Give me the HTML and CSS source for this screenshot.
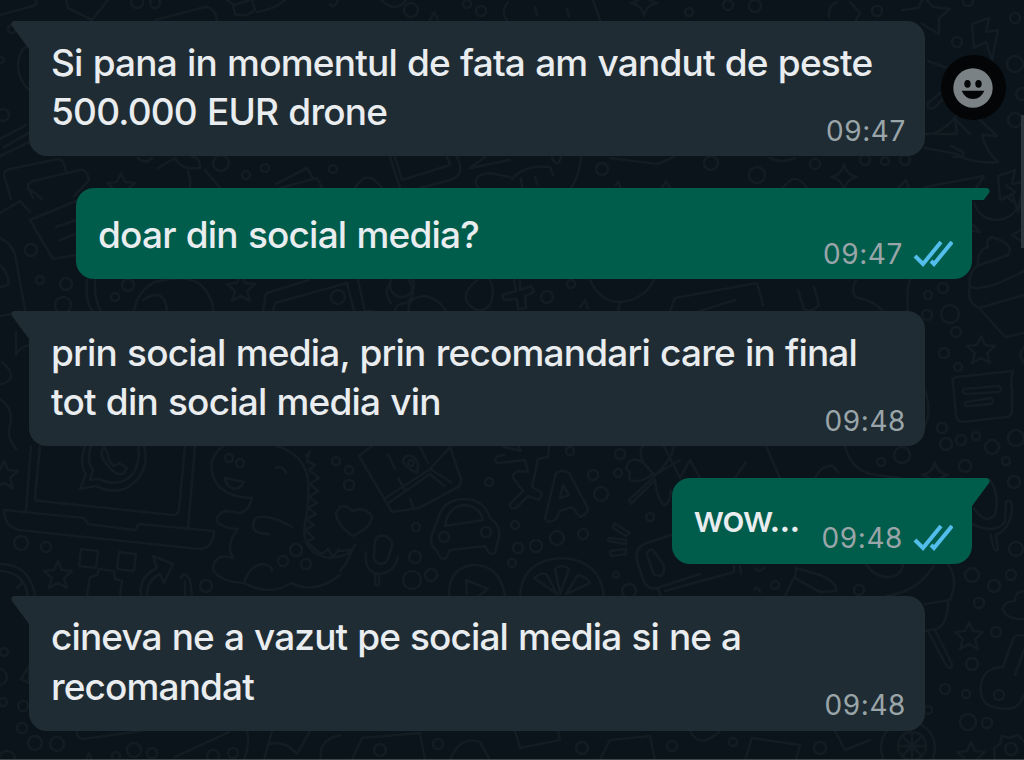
FILE: index.html
```html
<!DOCTYPE html>
<html lang="ro">
<head>
    <meta charset="UTF-8">
    <meta name="viewport" content="width=device-width, initial-scale=1.0">
    <title>Chat</title>
    <link rel="stylesheet" href="styles.css">
</head>
<body>
    <svg class="wallpaper" viewBox="0 0 1024 760" aria-hidden="true">
        <defs>
            <path id="star" d="M0-14 L4-5 L14-4 L6 3 L9 13 L0 8 L-9 13 L-6 3 L-14-4 L-4-5 Z"/>
            <path id="spark" d="M0-13 Q2-2 13 0 Q2 2 0 13 Q-2 2 -13 0 Q-2-2 0-13 Z"/>
            <path id="bolt" d="M-9-14 L8-20 L5-6 L17-8 L11 22 L5 4 L-7 10 Z"/>
            <path id="tail" d="M20 0 H3 Q-1 1 1 5 L18 28 H20 Z"/>
            <g id="checks">
                <path d="M2 16 L10 24 L28 2"/>
                <path d="M18 21 L21 24 L39 2"/>
            </g>
        </defs>

        <!-- top strip -->
        <path d="M0 15 L33 6 Q38 4 36 0 M66 0 L68 8 L92 20 L108 0 M155 20 L205 7 Q215 7 217 20"/>
        <path d="M227 0 L234 5 L250 0 M233 6 L235 14 Q246 18 255 10 L252 0 M257 12 Q275 9 285 0"/>
        <path d="M330 4 Q334 10 338 0 M381 0 Q396 14 406 0 M430 20 L434 12 L438 20 M507 20 Q500 12 508 2"/>
        <path d="M535 7 L537 15 M567 9 L569 17 M593 0 L600 20 M829 17 Q828 5 837 2 M850 2 L860 13 L856 20"/>
        <circle cx="137" cy="2" r="6"/><circle cx="155" cy="3" r="5"/><circle cx="411" cy="10" r="7"/>
        <circle cx="467" cy="4" r="4"/><circle cx="481" cy="11" r="5"/><circle cx="689" cy="12" r="4"/>
        <circle cx="728" cy="5" r="5"/><circle cx="755" cy="6" r="6"/><circle cx="877" cy="11" r="5"/><circle cx="968" cy="1" r="5"/>
        <use href="#spark" x="644" y="3"/>

        <!-- left edge -->
        <path d="M29 44 Q18 52 18 65 Q18 80 29 90 M0 139 L26 125 M4 147 L29 133 M0 156 L29 142"/>
        <circle cx="12" cy="29" r="4"/><circle cx="1" cy="60" r="3"/><circle cx="3" cy="115" r="6"/>
        <path d="M11 199 L4 175 Q4 170 10 169 L58 159 Q64 159 66 171 M33 198 L28 188 Q27 183 33 181 L80 170 Q87 169 89 180 L74 196 M28 188 L42 199"/>
        <path d="M0 213 L20 201 L30 212 M30 220 L76 201 M30 220 L53 259 L76 255 M56 227 L76 220 M60 240 L76 234 M0 238 Q10 242 15 254 L25 310 M0 265 Q10 275 8 285 L0 287 M0 316 L11 314"/>
        <circle cx="31" cy="250" r="6"/><circle cx="40" cy="280" r="4"/><circle cx="66" cy="284" r="6"/><circle cx="63" cy="305" r="8"/>
        <path d="M16 332 V355 Q18 348 29 345 M2 362 Q12 370 11 378 Q6 384 0 384 M0 399 Q14 408 10 425 Q6 437 16 449"/>

        <!-- strip under the first bubble -->
        <path d="M158 168 L175 158 M175 158 Q180 170 200 168 Q200 156 192 157 M188 171 Q191 180 190 188 M205 170 L220 188 M138 158 Q145 165 152 158"/>
        <path d="M276 184 L307 168 L313 178 M280 188 L317 178 L322 188 M355 188 Q367 167 382 188 M390 157 L400 188 M395 157 L402 180 L450 165 L447 157 M457 157 Q466 175 450 180 L420 188"/>
        <path d="M470 168 L485 157 M471 168 L509 160 M478 188 Q470 175 490 173 L510 177 M512 179 Q525 164 550 167 L553 175 M522 187 L521 178 M537 184 L535 177 M561 157 Q557 170 552 157 M581 157 Q580 175 571 188 M610 158 L658 164 L674 157 M770 158 Q782 164 795 158"/>
        <circle cx="221" cy="163" r="8"/><circle cx="246" cy="175" r="4"/><circle cx="265" cy="168" r="4"/><circle cx="333" cy="169" r="4"/>
        <circle cx="602" cy="169" r="6"/><circle cx="711" cy="163" r="7"/><circle cx="757" cy="175" r="8"/><circle cx="815" cy="164" r="5"/>
        <circle cx="865" cy="160" r="5"/><circle cx="885" cy="161" r="4"/><circle cx="905" cy="160" r="5"/><path d="M783 188 Q795 170 807 188 M616 185 L618 181 L621 188 M662 188 L666 181 L670 188"/>
        <use href="#star" x="121" y="187"/><use href="#spark" x="844" y="177"/>

        <!-- right side, top -->
        <path d="M902 10 L918 8 L924-3 M924-3 L933 7 L950 9 L939 18 L939 34 L922 24 M928 61 L947 68 M940 93 L928 103 Q926 110 934 108 L944 98 M925 134 Q940 136 958 114 M934 134 L957 134 L955 119 L970 134 M978 118 L997 136 L982 135 Q985 150 998 162 Q970 164 957 154 L925 148 M951 146 L963 152 Q966 157 953 157"/>
        <circle cx="957" cy="42" r="5"/><circle cx="1015" cy="18" r="5"/><circle cx="1015" cy="64" r="8"/><circle cx="1022" cy="94" r="6"/><circle cx="1015" cy="120" r="7"/>
        <path d="M898 188 L906 180 L909 188 M925 187 L984 176 L976 188 M974 203 Q980 220 998 220 Q1015 218 1020 202 M1006 185 L1015 192 L1008 198 L1022 209"/>
        <use href="#bolt" x="981" y="38"/><use href="#bolt" x="1007" y="190"/>
        <path d="M978 265 Q977 250 988 247 Q985 240 992 237 L1000 240 Q1014 247 1008 255 L980 265 M978 265 Q967 275 970 287 Q985 292 1024 271 M970 287 Q966 302 979 308 L1024 295 M980 309 L1005 337 L1024 333 M1012 235 L1024 228 M1012 235 L1024 243 M973 225 L980 232 L973 231"/>

        <!-- strip under the first green bubble -->
        <path d="M87 280 Q85 300 92 311 M95 280 Q94 300 101 311 M134 311 Q138 290 155 282 Q185 274 200 284 Q214 298 213 311 M143 300 Q164 286 167 310 M263 311 L265 299 Q264 294 270 292 L309 280 M273 311 L275 303 L347 283 L354 311 M358 280 L365 311 L372 311"/>
        <path d="M409 280 Q418 296 406 303 Q395 304 395 311 M409 311 Q406 297 426 296 Q440 300 446 311 M390 284 Q383 292 391 303 M478 280 Q462 291 467 302 Q478 317 490 305 Q496 291 490 280 M514 280 L516 291 L502 295 L504 300 L517 299 L518 309 L526 308 L525 296 L534 292 L531 286 L520 290 L520 280 M590 280 Q600 302 620 302 Q644 300 654 280 M620 302 L618 311 M580 307 L585 300 L588 308 M798 290 L804 309 Q810 314 819 305 L814 287 M856 280 Q848 297 862 299 Q875 302 883 311 M910 280 Q906 290 908 311"/>
        <circle cx="128" cy="285" r="6"/><circle cx="115" cy="297" r="4"/><circle cx="338" cy="297" r="7"/><circle cx="402" cy="285" r="12"/><circle cx="547" cy="297" r="6"/><circle cx="571" cy="284" r="4"/>
        <circle cx="943" cy="288" r="5"/><circle cx="928" cy="295" r="4"/><circle cx="927" cy="315" r="5"/><circle cx="950" cy="314" r="9"/>
        <path d="M670 311 L675 298 L757 283 L763 305 M700 311 L735 300"/>
        <use href="#star" x="241" y="288"/>

        <!-- right side, middle -->
        <circle cx="956" cy="332" r="5"/><circle cx="944" cy="353" r="5"/><circle cx="958" cy="367" r="4"/>
        <use href="#star" x="981" y="350"/>
        <path d="M1024 347 Q1017 355 1024 363 M953 383 Q951 378 957 377 L1013 371 Q1010 382 1012 388 V410 Q1012 417 1006 417 L963 422 Q957 422 956 416 Z M964 389 L999 386 Q1003 389 999 392 L966 394 Q961 392 964 389 Z M966 402 L991 398 Q995 401 991 404 L966 406 Q963 404 966 402 Z M925 391 Q932 410 925 426"/>
        <circle cx="942" cy="428" r="5"/><circle cx="946" cy="444" r="6"/><circle cx="961" cy="440" r="5"/><circle cx="976" cy="436" r="4"/><circle cx="992" cy="447" r="7"/><circle cx="1016" cy="438" r="8"/><circle cx="902" cy="455" r="8"/><circle cx="965" cy="466" r="6"/><circle cx="1006" cy="461" r="4"/>

        <!-- laptop -->
        <path d="M31 446 L26 511 M40 446 L35 497 Q35 501 40 501 L173 515 Q179 515 179 509 L185 446 M195 446 L188 529 M4 510 L84 518 L88 524 L135 530 L139 524 L214 531 Q213 549 199 549 L19 530 Q4 526 4 510 Z"/>
        <path d="M85 446 Q79 464 86 474 L80 489 L96 486 Q123 499 140 476 Q149 462 144 446 M91 446 Q86 462 93 470 L90 480 L99 479 Q122 489 134 472 Q141 459 138 446 M104 447 Q98 455 107 464 Q115 476 123 474 L127 468 L119 463 L114 466 Q107 460 108 454 Z"/>
        <circle cx="21" cy="543" r="7"/><circle cx="46" cy="547" r="5"/>
        <use href="#star" x="4" y="475"/><use href="#star" x="58" y="575"/>
        <path d="M81 549 L98 551 L96 568 L79 566 Z M119 552 L136 554 L134 571 L117 569 Z M87 596 L90 577 L97 575 L99 569 L114 571 L115 579 L122 581 L120 596 M0 564 Q30 564 35 596 M0 571 Q24 572 28 596 M17 588 L22 583 M141 596 Q138 577 157 568 L153 556 L173 564 L164 583 L160 574 Q147 580 147 596 M181 578 Q184 570 190 580 L192 596 M185 581 L185 596"/>
        <circle cx="206" cy="586" r="6"/>

        <!-- dinosaur -->
        <path d="M223 446 Q207 458 213 476 Q220 497 252 498 Q249 511 240 513 L225 511 Q216 514 217 522 Q225 529 238 529 Q225 545 233 558 M233 558 Q215 552 213 569 Q219 582 244 583 Q249 566 262 564 Q272 565 272 571 M244 583 Q270 597 291 583 Q315 595 340 575 M277 446 Q305 455 308 480 Q310 500 304 530 Q305 555 330 558 Q350 557 355 545"/>
        <path d="M306 456 L310 451 L307 461 L315 465 L309 470 L319 478 L310 484 L318 491 L309 497 L317 503 L308 508 L316 514 L306 519 L314 525 L305 530 L314 538 L307 542 L316 550 L322 554 L328 549 L333 557 L339 549"/>
        <path d="M292 527 Q268 513 256 518 Q246 533 269 534 M225 478 L244 482 Q239 491 232 488 Q226 486 225 478 Z M276 468 Q283 465 286 473"/>
        <circle cx="229" cy="458" r="4"/><circle cx="240" cy="463" r="4"/><circle cx="296" cy="550" r="6"/><circle cx="283" cy="561" r="5"/><circle cx="306" cy="564" r="5"/>

        <!-- heart, microphone, map and car -->
        <path d="M340 507 Q346 504 352 511 Q366 506 372 517 Q370 529 352 536 Q336 523 336 513 Z M340 551 L352 550 Q348 562 340 571"/>
        <path d="M375 541 Q377 534 385 536 Q393 539 392 546 L388 559 Q384 566 377 563 Q373 560 374 553 Z M366 552 Q364 573 379 574 Q394 573 398 557 M375 573 V585 H379 V574"/>
        <path d="M372 446 L359 456 L392 512 L419 508 L458 487 Q463 482 460 476 L450 447 L430 469 L384 499 M387 504 L430 474 L444 486 M430 469 L451 482 M388 454 L395 469 M398 478 L405 490 M410 499 L413 507 M420 447 L428 463 M417 473 Q402 466 403 460 Q406 453 414 457 Q420 463 417 473 Z"/>
        <path d="M438 519 Q443 499 465 499 Q485 500 490 518 Q501 525 499 537 L495 553 Q489 556 485 546 L450 550 L446 558 Q440 561 437 551 Q429 545 432 534 Z M445 526 Q448 505 466 505 Q480 507 483 520 Z"/>
        <circle cx="411" cy="463" r="3"/><circle cx="444" cy="537" r="5"/><circle cx="486" cy="532" r="5"/><circle cx="349" cy="470" r="4"/><circle cx="349" cy="485" r="5"/><circle cx="336" cy="461" r="4"/>
        <circle cx="416" cy="527" r="4"/><circle cx="415" cy="557" r="6"/><circle cx="412" cy="580" r="9"/><circle cx="431" cy="575" r="6"/><circle cx="489" cy="482" r="4"/>
        <path d="M449 596 Q448 569 472 565 Q500 564 505 596 M467 594 L466 580 L488 589 L479 596 M520 596 Q522 560 562 558 Q600 560 604 596 M557 594 L534 578 Q543 571 547 575 Z M560 594 L555 569 Q562 563 569 569 Z M566 594 L578 575 Q587 577 590 583 Z"/>

        <!-- letters, dots and clover -->
        <path d="M504 447 L521 451 L518 446 M504 455 Q492 456 497 463 L525 460 L528 472 L520 471 Q510 473 514 479 L523 491 L510 504 Q510 510 516 508 L528 496 L539 500 L542 493 L532 487 L538 459 L548 457 L549 447"/>
        <path d="M556 473 Q562 469 569 473 L588 508 Q588 514 580 517 L572 507 L560 511 L556 519 Q547 525 545 518 Z M563 485 L569 495 L560 498 Z"/>
        <circle cx="570" cy="451" r="4"/><circle cx="593" cy="475" r="5"/><circle cx="601" cy="494" r="7"/><circle cx="618" cy="473" r="4"/><circle cx="620" cy="454" r="5"/>
        <circle cx="515" cy="525" r="4"/><circle cx="518" cy="548" r="5"/><circle cx="536" cy="546" r="6"/><circle cx="557" cy="538" r="7"/><circle cx="583" cy="534" r="5"/><circle cx="512" cy="563" r="4"/><circle cx="650" cy="517" r="4"/><circle cx="629" cy="591" r="7"/><circle cx="616" cy="575" r="3"/>
        <path d="M655 475 Q635 458 643 446 M655 475 Q672 460 674 446 M653 474 Q640 455 630 461 Q623 469 630 472 L629 479 Q638 485 653 474 Z M655 476 L629 500 L631 504 L655 480 Q658 503 665 505 Q670 503 671 490 M655 475 L680 460"/>
        <path d="M614 523 L630 533 L626 536 L613 528 Z M609 538 L626 540 V544 L608 541 Z M610 551 L626 549 V554 L611 556 Z M671 535 L644 544 Q635 548 637 561 L644 582 Q650 592 660 587 L700 574 M647 555 Q647 549 653 550 L663 564 Q666 574 660 576 L654 575 Z M658 589 L661 596"/>
        <path d="M665 591 L734 572 V566 M740 566 L741 574 M755 568 Q758 574 764 568 M796 568 L820 575 Q838 583 836 591 L820 592 L795 578 Z M793 579 L785 596 M754 590 Q757 584 760 592"/>
        <circle cx="775" cy="585" r="4"/><circle cx="859" cy="590" r="5"/>
        <path d="M664 446 L680 478 L690 460 L700 478 M735 478 L746 462 M815 478 Q822 464 833 466 L838 472 M845 446 Q850 468 870 474 L900 478 M766 446 L780 478"/>
        <circle cx="881" cy="462" r="4"/><use href="#spark" x="935" y="475"/>

        <!-- right side, bottom -->
        <circle cx="1014" cy="482" r="6"/><circle cx="1016" cy="549" r="7"/>
        <path d="M990 480 Q1000 494 995 515 Q985 525 974 508 M972 524 Q995 535 1005 522 L1006 502 Q1010 498 1012 505 Q1012 528 996 535 L998 550 Q993 553 991 535"/>
        <path d="M866 564 Q875 578 890 577 Q902 575 903 564 M886 596 Q910 593 925 577 L934 566 M948 564 Q959 580 950 600 L925 604 M948 600 Q948 625 936 629 L925 631 M929 633 L946 665 Q951 672 952 664 L935 630"/>
        <circle cx="972" cy="575" r="7"/><circle cx="994" cy="586" r="6"/><circle cx="1011" cy="575" r="5"/><circle cx="979" cy="603" r="5"/><circle cx="996" cy="632" r="5"/><circle cx="972" cy="664" r="6"/>
        <circle cx="945" cy="689" r="5"/><circle cx="966" cy="694" r="4"/><circle cx="968" cy="722" r="8"/><circle cx="987" cy="723" r="5"/><circle cx="999" cy="695" r="5"/><circle cx="928" cy="710" r="4"/>
        <path d="M1024 591 Q1014 592 1015 601 Q1002 602 1003 610 Q1007 620 1024 619 M1024 636 Q1016 633 1013 639 L1003 667 Q987 667 982 680 Q977 700 990 706 Q1012 713 1020 703 L1024 695 M1015 675 L1024 650"/>
        <use href="#star" x="969" y="636"/><use href="#star" x="971" y="756"/>
        <circle cx="1011" cy="749" r="6"/><path d="M995 760 L994 748 L1000 744 L1002 736 L1010 738 L1018 735 L1024 742"/>

        <!-- bottom strip -->
        <circle cx="912" cy="746" r="14"/><circle cx="908" cy="748" r="27"/><path d="M912 732 V760 M898 746 H926 M902 736 L922 756 M922 736 L902 756"/>
        <circle cx="4" cy="652" r="4"/><circle cx="-1" cy="677" r="8"/><circle cx="3" cy="702" r="4"/><circle cx="23" cy="706" r="5"/><circle cx="22" cy="728" r="5"/><path d="M21 679 L29 666 V683 Z"/>
        <circle cx="35" cy="743" r="7"/><circle cx="57" cy="744" r="7"/><circle cx="134" cy="750" r="7"/><circle cx="116" cy="756" r="4"/><circle cx="152" cy="753" r="5"/><circle cx="213" cy="756" r="6"/><circle cx="233" cy="753" r="5"/><circle cx="7" cy="759" r="8"/>
        <path d="M77 731 Q76 738 83 739 L142 731 M175 757 L229 732 M247 731 Q250 745 244 760 M272 731 L264 760 M270 744 Q285 740 297 754 L310 731 M340 735 Q318 740 321 760 M86 760 L89 753 L92 760"/>
        <path d="M352 760 L362 738 L420 733 L425 760 M450 760 Q460 735 480 742 L490 760 M515 731 L520 748 L560 740 L558 731 M600 760 L610 740 L650 736 L655 760 M690 731 Q700 750 720 731 M745 760 L752 738 L800 745 L796 760 M835 731 L845 750 L870 740"/>
        <circle cx="380" cy="750" r="6"/><circle cx="438" cy="744" r="5"/><circle cx="582" cy="748" r="6"/><circle cx="672" cy="746" r="5"/><circle cx="733" cy="742" r="4"/><circle cx="820" cy="748" r="6"/>
    </svg>

    <main class="chat">
        <div class="row">
            <div class="bubble in">
                <svg class="tail" viewBox="0 0 20 28"><use href="#tail"/></svg>
                <p class="text">Si pana in momentul de fata am vandut de peste<br>500.000 EUR drone</p>
                <span class="meta">09:47</span>
            </div>
            <button class="react" aria-label="React">
                <svg viewBox="0 0 40 40">
                    <circle class="face" cx="20" cy="20" r="19.7"/>
                    <ellipse cx="14.5" cy="15.8" rx="3.2" ry="3.9"/>
                    <ellipse cx="25.5" cy="15.8" rx="3.2" ry="3.9"/>
                    <path d="M8.7 22.8 H31.3 Q28 31 20 31 Q12 31 8.7 22.8 Z"/>
                </svg>
            </button>
        </div>

        <div class="row sent">
            <div class="bubble out wide">
                <svg class="tail cut" viewBox="0 0 20 12"><use href="#tail"/></svg>
                <p class="text">doar din social media?</p>
                <span class="meta">09:47<svg class="ticks" viewBox="0 0 40 28"><use href="#checks"/></svg></span>
            </div>
        </div>

        <div class="row">
            <div class="bubble in">
                <svg class="tail" viewBox="0 0 20 28"><use href="#tail"/></svg>
                <p class="text">prin social media, prin recomandari care in final<br>tot din social media vin</p>
                <span class="meta">09:48</span>
            </div>
        </div>

        <div class="row sent">
            <div class="bubble out short">
                <svg class="tail" viewBox="0 0 20 28"><use href="#tail"/></svg>
                <p class="text">wow...</p>
                <span class="meta">09:48<svg class="ticks" viewBox="0 0 40 28"><use href="#checks"/></svg></span>
            </div>
        </div>

        <div class="row">
            <div class="bubble in">
                <svg class="tail" viewBox="0 0 20 28"><use href="#tail"/></svg>
                <p class="text tight">cineva ne a vazut pe social media si ne a<br>recomandat</p>
                <span class="meta">09:48</span>
            </div>
        </div>
    </main>
    <div class="scrollbar"></div>
</body>
</html>
```
FILE: styles.css
```css
* {
    box-sizing: border-box;
}

body {
    margin: 0;
    width: 1024px;
    height: 760px;
    position: relative;
    overflow: hidden;
    background: #0b141a;
    border-bottom: 1px solid #41484c;
    font-family: Inter, "Liberation Sans", sans-serif;
}

.wallpaper {
    position: absolute;
    top: 0;
    left: 0;
    width: 1024px;
    height: 760px;
    fill: none;
    stroke: #131c22;
    stroke-width: 2.6;
    stroke-linecap: round;
    stroke-linejoin: round;
}

.chat {
    position: relative;
    display: flex;
    flex-direction: column;
    gap: 32px;
    padding: 21px 0 0 29px;
}

.row {
    display: flex;
}

.row.sent {
    justify-content: flex-end;
    padding-right: 52px;
}

.bubble {
    position: relative;
    display: flex;
    flex: none;
    justify-content: space-between;
    border-radius: 18px;
    padding: 16.5px 19px 0 22px;
}

.in {
    width: 896px;
    height: 135px;
    background: #202c33;
    color: #202c33;
    border-top-left-radius: 0;
}

.out {
    background: #005c4b;
    color: #005c4b;
    border-top-right-radius: 0;
}

.wide {
    width: 896px;
    height: 91px;
    padding-top: 22px;
}

.short {
    width: 300.5px;
    height: 85.5px;
    padding-top: 15.5px;
}

.text {
    margin: 0;
    font-size: 37px;
    font-weight: 500;
    line-height: 49.5px;
    letter-spacing: -0.8px;
    word-spacing: 1px;
    color: #e9edef;
    white-space: nowrap;
}

.tight {
    letter-spacing: -0.88px;
}

.short .text {
    letter-spacing: -1.3px;
}

.meta {
    display: flex;
    align-self: flex-end;
    align-items: center;
    margin-bottom: 8.5px;
    font-size: 28px;
    line-height: 34px;
    letter-spacing: 0.6px;
    color: #9aa5a9;
}

.in .meta {
    margin-left: -100px;
}

.ticks {
    width: 40px;
    height: 28px;
    margin-left: 10px;
    fill: none;
    stroke: #53bdeb;
    stroke-width: 4;
}

.tail {
    position: absolute;
    top: 0;
    left: -18px;
    width: 20px;
    height: 28px;
    fill: currentColor;
}

.out .tail {
    left: auto;
    right: -18px;
    transform: scaleX(-1);
}

.out .cut {
    height: 12px;
}

.react {
    display: flex;
    align-items: center;
    justify-content: center;
    flex: none;
    width: 65px;
    height: 65px;
    margin: 34px 0 0 15.5px;
    padding: 0;
    border: 0;
    border-radius: 50%;
    background: #030506;
}

.react svg {
    width: 40px;
    height: 40px;
    fill: #030506;
}

.react .face {
    fill: #7b8285;
}

.scrollbar {
    position: absolute;
    top: 115px;
    right: 0;
    width: 3px;
    height: 133px;
    background: #2b353b;
}
```
